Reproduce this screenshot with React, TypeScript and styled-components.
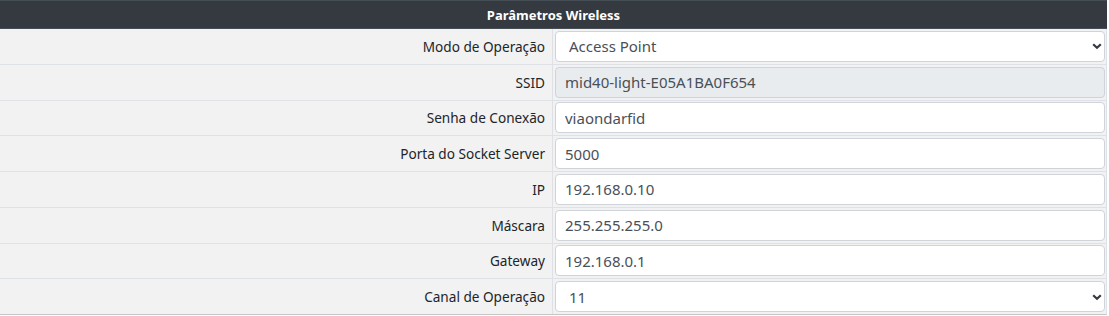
import React from "react";
import styled, { createGlobalStyle } from "styled-components";

const GlobalStyle = createGlobalStyle`
  html, body { margin: 0; padding: 0; background: #ffffff; }
  body { font-family: "Noto Sans", "Open Sans", sans-serif; color: #212529; }
`;

const Table = styled.div`
  width: 1107px;
  display: flex;
  flex-direction: column;
`;

const Header = styled.div`
  height: 29px;
  box-sizing: border-box;
  background: #343a40;
  border-top: 1px solid #454d55;
  border-bottom: 1px solid #454d55;
  color: #ffffff;
  font-weight: 700;
  font-size: 13px;
  display: flex;
  align-items: center;
  justify-content: center;
`;

const Row = styled.div<{ $last?: boolean }>`
  display: grid;
  grid-template-columns: 553px 1fr;
  height: 35.75px;
  box-sizing: border-box;
  background: #f2f2f2;
  border-bottom: 1px solid ${(p) => (p.$last ? "#c6c6c6" : "#dee2e6")};
  border-right: 1px solid #dee2e6;
`;

const Label = styled.div`
  display: flex;
  align-items: center;
  justify-content: flex-end;
  padding-right: 7px;
  border-right: 1px solid #dee2e6;
  font-size: 13.6px;
  color: #212529;
  white-space: nowrap;
`;

const Cell = styled.div`
  display: flex;
  align-items: center;
  padding: 0 1px 0 2px;
  position: relative;
`;

const Input = styled.input<{ $disabled?: boolean }>`
  width: 100%;
  height: 31px;
  box-sizing: border-box;
  border: 1px solid #ced4da;
  border-radius: 4px;
  background: ${(p) => (p.$disabled ? "#e9ecef" : "#ffffff")};
  padding: 0 9px;
  font-family: "Noto Sans", "Open Sans", sans-serif;
  font-size: 15px;
  color: #495057;
  outline: none;
`;

const Select = styled.select`
  width: 100%;
  height: 31px;
  box-sizing: border-box;
  border: 1px solid #ced4da;
  border-radius: 4px;
  background: #ffffff;
  padding: 0 28px 0 13px;
  font-family: "Noto Sans", "Open Sans", sans-serif;
  font-size: 15px;
  color: #495057;
  appearance: none;
  -webkit-appearance: none;
  outline: none;
`;

const Chevron = styled.svg`
  position: absolute;
  right: 4px;
  top: 50%;
  margin-top: -3px;
  pointer-events: none;
`;

const rows: { label: string; kind: "select" | "input" | "disabled"; value: string }[] = [
  { label: "Modo de Operação", kind: "select", value: "Access Point" },
  { label: "SSID", kind: "disabled", value: "mid40-light-E05A1BA0F654" },
  { label: "Senha de Conexão", kind: "input", value: "viaondarfid" },
  { label: "Porta do Socket Server", kind: "input", value: "5000" },
  { label: "IP", kind: "input", value: "192.168.0.10" },
  { label: "Máscara", kind: "input", value: "255.255.255.0" },
  { label: "Gateway", kind: "input", value: "192.168.0.1" },
  { label: "Canal de Operação", kind: "select", value: "11" },
];

export default function App() {
  return (
    <>
      <GlobalStyle />
      <Table>
        <Header>Parâmetros Wireless</Header>
        {rows.map((r, i) => (
          <Row key={r.label} $last={i === rows.length - 1}>
            <Label>{r.label}</Label>
            <Cell>
              {r.kind === "select" ? (
                <>
                  <Select defaultValue={r.value}>
                    <option value={r.value}>{r.value}</option>
                  </Select>
                  <Chevron width="10" height="7" viewBox="0 0 10 7">
                    <path d="M1.2 1.2 L5 4.8 L8.8 1.2" fill="none" stroke="#343a40" strokeWidth="2.2" />
                  </Chevron>
                </>
              ) : (
                <Input
                  $disabled={r.kind === "disabled"}
                  disabled={r.kind === "disabled"}
                  defaultValue={r.value}
                />
              )}
            </Cell>
          </Row>
        ))}
      </Table>
    </>
  );
}
